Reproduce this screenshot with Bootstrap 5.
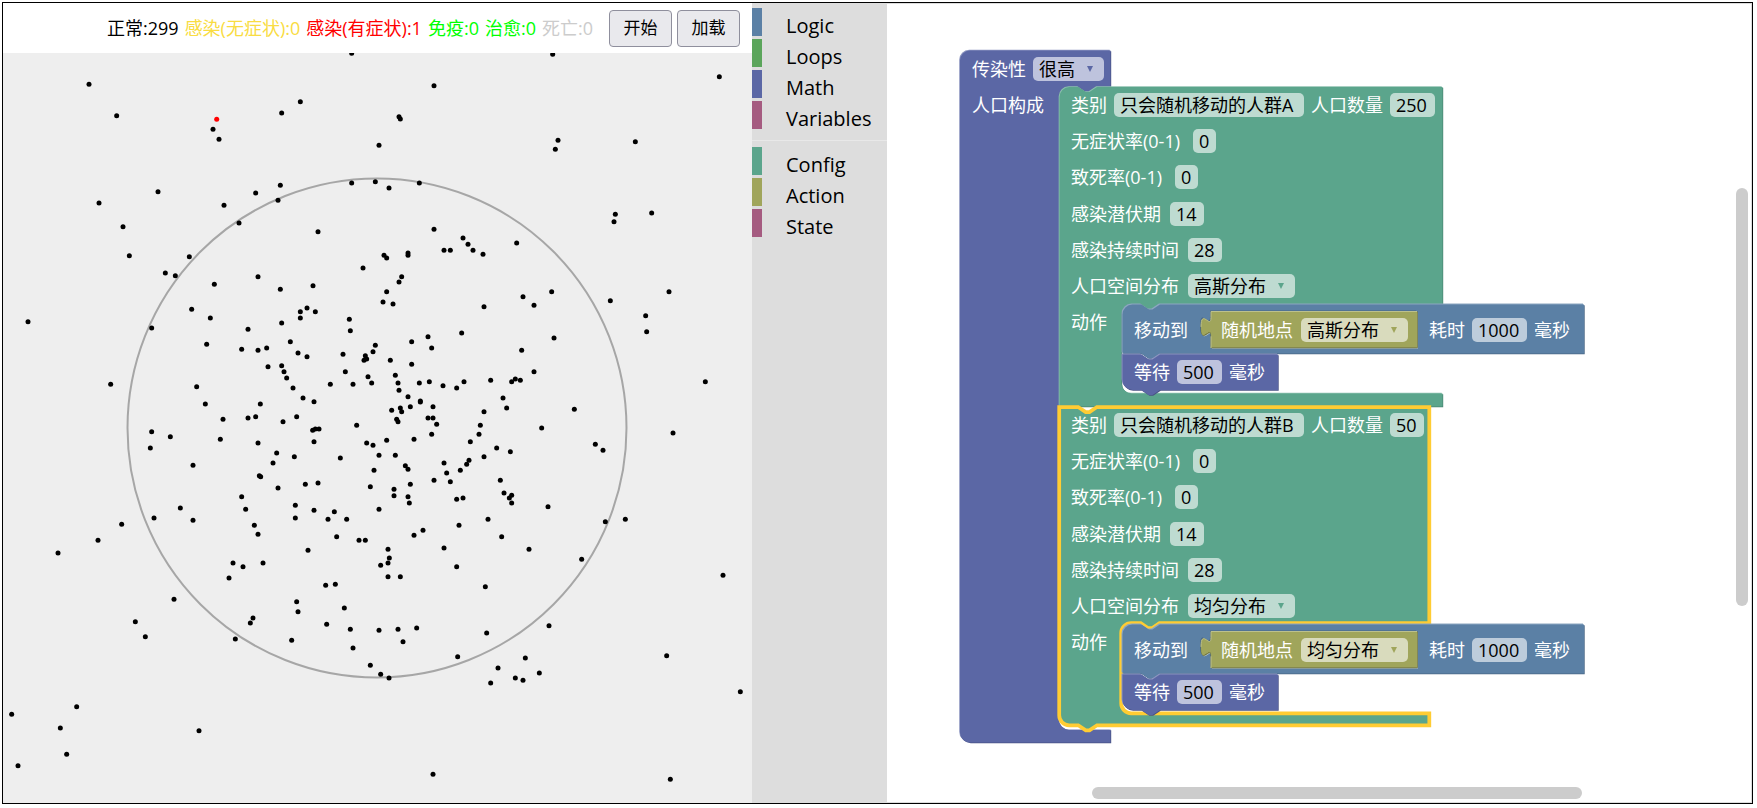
<!DOCTYPE html>
<html lang="zh-CN">
<head>
<meta charset="utf-8">
<meta name="viewport" content="width=device-width, initial-scale=1">
<title>传染模拟</title>
<link rel="stylesheet" href="https://cdn.jsdelivr.net/npm/bootstrap@5.3.0/dist/css/bootstrap.min.css">
<style>
  body { font-family: "Open Sans", "Noto Sans CJK SC", sans-serif; font-size: 18px; line-height: 24px; color: #000; background: #fff; }
  .app-frame { margin: 2px 4px 4px 2px; height: calc(100vh - 6px); border: 1px solid #000; }
  .sim-panel { width: calc(100vh - 59px); }
  .stat-bar { height: 50px; padding-right: 12px; white-space: nowrap; }
  .stat-list { gap: 6px; margin-right: 16px; }
  .btn-pair { gap: 5px; }
  .c-latent { color: #f9dc42; } .c-sick { color: #f00; } .c-good { color: #0f0; } .c-dead { color: #ccc; }
  .sim-btn { width: 63px; height: 37px; padding: 0; font-size: 17px; line-height: 24px; color: #000; background: #e9e9ed; border: 1px solid #8f8f9d; border-radius: 4px; }
  .sim-btn:hover { background: #d0d0d7; border-color: #676774; }
  .arena { background: #eee; }

  .toolbox { width: 135px; background: #ddd; padding-top: 5px; font-size: 20px; }
  .tool-item { display: block; height: 28px; margin-bottom: 3px; padding: 4px 0 0 24px; border-left: 10px solid; color: #000; text-decoration: none; line-height: 28px; }
  .tool-sep { height: 1px; margin: 11px 0 6px; background: #e8e8e8; }
  .t-logic { border-color: #5b80a5; } .t-loops { border-color: #5ba55b; } .t-math { border-color: #5b67a5; }
  .t-var { border-color: #a55b80; } .t-config { border-color: #5ba58c; } .t-action { border-color: #a0a55b; }

  .workspace { border: 1px solid #ddd; border-left: 0; padding: 46px 0 0 73px; }
  .bar-v { right: 3px; top: 184px; width: 12px; height: 418px; background: #ccc; border-radius: 6px; }
  .bar-h { left: 205px; bottom: 3px; width: 490px; height: 12px; background: #ccc; border-radius: 6px; }

  .stack { width: 630px; color: #fff; white-space: nowrap; }
  .shapes { left: 0; top: 0; overflow: visible; }
  .line { display: flex; align-items: center; gap: 7px; height: 36px; }
  .solo { gap: 9px; }
  .head-line { height: 37px; padding-left: 12px; }
  .arm-root { width: 99px; padding-left: 12px; }
  .group { height: 320px; padding-left: 12px; }
  .group-rows { height: 217px; display: flex; flex-direction: column; justify-content: space-between; }
  .arm-group { width: 51px; }
  .inner-line { padding-left: 12px; }
  .move-line { height: 50px; padding-top: 2px; }
  .nested { gap: 8px; margin: 0 6px 0 26px; }
  .field { height: 24px; padding: 0 0 0 6px; border: 0; border-radius: 5px; font: inherit; line-height: 24px; color: #000; appearance: none; background-color: #bedbd1; background-repeat: no-repeat; background-position: right 10px center; }
  .w-1 { width: 23px; } .w-2 { width: 34px; } .w-3 { width: 45px; } .w-4 { width: 55px; } .w-name { width: 190px; }
  .w-sel { width: 107px; } .w-sel-short { width: 71px; }
  select.field { background-image: url("data:image/svg+xml,%3Csvg xmlns='http://www.w3.org/2000/svg' width='8' height='8'%3E%3Cpath d='M1 1h6l-3 6z' fill='%235ba58c'/%3E%3C/svg%3E"); }
  .field.f-math { background-color: #bec3dd; }
  .field.f-logic { background-color: #bdccdb; }
  .field.f-action { background-color: #d9dbbd; }
  select.f-math { background-image: url("data:image/svg+xml,%3Csvg xmlns='http://www.w3.org/2000/svg' width='8' height='8'%3E%3Cpath d='M1 1h6l-3 6z' fill='%235b67a5'/%3E%3C/svg%3E"); }
  select.f-action { background-image: url("data:image/svg+xml,%3Csvg xmlns='http://www.w3.org/2000/svg' width='8' height='8'%3E%3Cpath d='M1 1h6l-3 6z' fill='%23a0a55b'/%3E%3C/svg%3E"); }
</style>
</head>
<body>
<div class="app-frame d-flex overflow-hidden">

  <section class="sim-panel d-flex flex-column flex-shrink-0">
    <div class="stat-bar d-flex align-items-center justify-content-end">
      <div class="stat-list d-flex">
        <span>正常:299</span>
        <span class="c-latent">感染(无症状):0</span>
        <span class="c-sick">感染(有症状):1</span>
        <span class="c-good">免疫:0</span>
        <span class="c-good">治愈:0</span>
        <span class="c-dead">死亡:0</span>
      </div>
      <div class="btn-pair d-flex">
        <button type="button" class="btn sim-btn">开始</button>
        <button type="button" class="btn sim-btn">加载</button>
      </div>
    </div>
    <svg class="arena d-block w-100" viewBox="0 0 749 750" role="img" aria-label="人群分布">
      <g id="people"></g>
      <circle cx="374" cy="375" r="249.5" fill="none" stroke="#000" stroke-opacity=".3" stroke-width="2"/>
    </svg>
  </section>

  <nav class="toolbox flex-shrink-0">
    <a href="#" class="tool-item t-logic">Logic</a>
    <a href="#" class="tool-item t-loops">Loops</a>
    <a href="#" class="tool-item t-math">Math</a>
    <a href="#" class="tool-item t-var">Variables</a>
    <div class="tool-sep"></div>
    <a href="#" class="tool-item t-config">Config</a>
    <a href="#" class="tool-item t-action">Action</a>
    <a href="#" class="tool-item t-var">State</a>
  </nav>

  <main class="workspace flex-grow-1 position-relative overflow-hidden">
    <div class="stack position-relative">
      <svg class="shapes position-absolute" width="630" height="700" viewBox="960 50 630 700" aria-hidden="true">
        <defs>
          <path id="p-root" d="M960 60.5a10 10 0 0 1 10-10H1110.5V87H1097l-7.5 5h-3.75l-7.5-5H1069a10 10 0 0 0-10 10V719.5a10 10 0 0 0 10 10H1110.5V742.5H970a10 10 0 0 1-10-10z"/>
          <path id="p-a" d="M1059.5 97a10 10 0 0 1 10-10H1078.2l7.5 5h3.75l7.5-5H1442.5V304H1159.5l-7.5 5h-3.75l-7.5-5H1131.5a10 10 0 0 0-10 10V383.5a10 10 0 0 0 10 10H1442.5V406.5H1059.5z"/>
          <path id="p-b" d="M1059.2 407H1078.2l7.5 5h3.75l7.5-5H1429.3V623.2H1159.5l-7.5 5h-3.75l-7.5-5H1131.2a10 10 0 0 0-10 10V703.3a10 10 0 0 0 10 10H1429.3V725.3H1097l-7.5 5h-3.75l-7.5-5H1069.2a10 10 0 0 1-10-10z"/>
          <path id="p-move" d="M1122.5 314.5a10 10 0 0 1 10-10H1141.2l7.5 5h3.75l7.5-5H1584V353.5H1160l-7.5 5h-3.75l-7.5-5H1122.5z"/>
          <path id="p-wait" d="M1122.5 354.5H1141.2l7.5 5h3.75l7.5-5H1278V390H1160l-7.5 5h-3.75l-7.5-5H1132.5a10 10 0 0 1-10-10z"/>
          <path id="p-place" d="M1211 311.5H1417V347.5H1211V336.3C1211 323.8 1201 346.3 1201 326.9S1211 330 1211 317.5z"/>
          <g id="actions">
            <g><use href="#p-move" x="-1" y="-1" fill="#8ca6c0"/><use href="#p-move" x=".7" y=".7" fill="#496684"/><use href="#p-move" fill="#5b80a5"/></g>
            <g><use href="#p-wait" x="-1" y="-1" fill="#8c95c0"/><use href="#p-wait" x=".7" y=".7" fill="#495284"/><use href="#p-wait" fill="#5b67a5"/></g>
            <path d="M1141.2 353l7.5 5h3.75l7.5-5z" fill="#5b80a5"/>
            <g><use href="#p-place" x="1" y="1" fill="#bdccdb"/><use href="#p-place" x="-1" y="-1" fill="#496684"/><use href="#p-place" x=".3" y=".3" stroke="#80844a"/><use href="#p-place" fill="#a0a55b"/><path d="M1211 348V336.3M1201 326.9C1201 307.5 1211 330 1211 317.5V311.5H1417" fill="none" stroke="#bcc08c"/></g>
          </g>
        </defs>
        <g><use href="#p-root" x="-.8" y="-.8" fill="#8c95c0"/><use href="#p-root" x=".7" y=".7" fill="#495284"/><use href="#p-root" fill="#5b67a5"/></g>
        <path d="M1059 700V719.5a10 10 0 0 0 10 10H1110V700z" fill="#fff"/>
        <g><use href="#p-a" x="-.8" y="-.8" fill="#8cc0ae"/><use href="#p-a" x=".7" y=".7" fill="#498470"/><use href="#p-a" fill="#5ba58c"/></g>
        <use href="#p-b" fill="#5ba58c" stroke="#fc3" stroke-width="3.75"/>
        <use href="#actions"/>
        <use href="#actions" y="320"/>
      </svg>

      <div class="position-relative">
        <div class="line head-line">
          <label for="infect">传染性</label>
          <select id="infect" class="field f-math w-sel-short"><option>很高</option></select>
        </div>
        <div class="d-flex">
          <div class="arm-root"><div class="line">人口构成</div></div>
          <div>
            <section class="group">
              <div class="group-rows">
                <div class="line"><label for="a1">类别</label><input id="a1" class="field w-name" value="只会随机移动的人群A"><label for="a2">人口数量</label><input id="a2" class="field w-3" value="250"></div>
                <div class="line solo"><label for="a3" class="me-1">无症状率(0-1)</label><input id="a3" class="field w-1" value="0"></div>
                <div class="line solo"><label for="a4" class="me-1">致死率(0-1)</label><input id="a4" class="field w-1" value="0"></div>
                <div class="line solo"><label for="a5">感染潜伏期</label><input id="a5" class="field w-2" value="14"></div>
                <div class="line solo"><label for="a6">感染持续时间</label><input id="a6" class="field w-2" value="28"></div>
                <div class="line solo"><label for="a7">人口空间分布</label><select id="a7" class="field w-sel"><option>高斯分布</option></select></div>
              </div>
              <div class="d-flex">
                <div class="arm-group"><div class="line">动作</div></div>
                <div>
                  <div class="line inner-line move-line"><span>移动到</span>
                    <div class="nested d-flex"><label for="a8">随机地点</label><select id="a8" class="field f-action w-sel"><option>高斯分布</option></select></div>
                    <label for="a9" class="ps-2">耗时</label><input id="a9" class="field f-logic w-4" value="1000"><span>毫秒</span></div>
                  <div class="line inner-line"><label for="a10">等待</label><input id="a10" class="field f-math w-3" value="500"><span>毫秒</span></div>
                </div>
              </div>
            </section>
            <section class="group">
              <div class="group-rows">
                <div class="line"><label for="b1">类别</label><input id="b1" class="field w-name" value="只会随机移动的人群B"><label for="b2">人口数量</label><input id="b2" class="field w-2" value="50"></div>
                <div class="line solo"><label for="b3" class="me-1">无症状率(0-1)</label><input id="b3" class="field w-1" value="0"></div>
                <div class="line solo"><label for="b4" class="me-1">致死率(0-1)</label><input id="b4" class="field w-1" value="0"></div>
                <div class="line solo"><label for="b5">感染潜伏期</label><input id="b5" class="field w-2" value="14"></div>
                <div class="line solo"><label for="b6">感染持续时间</label><input id="b6" class="field w-2" value="28"></div>
                <div class="line solo"><label for="b7">人口空间分布</label><select id="b7" class="field w-sel"><option>均匀分布</option></select></div>
              </div>
              <div class="d-flex">
                <div class="arm-group"><div class="line">动作</div></div>
                <div>
                  <div class="line inner-line move-line"><span>移动到</span>
                    <div class="nested d-flex"><label for="b8">随机地点</label><select id="b8" class="field f-action w-sel"><option>均匀分布</option></select></div>
                    <label for="b9" class="ps-2">耗时</label><input id="b9" class="field f-logic w-4" value="1000"><span>毫秒</span></div>
                  <div class="line inner-line"><label for="b10">等待</label><input id="b10" class="field f-math w-3" value="500"><span>毫秒</span></div>
                </div>
              </div>
            </section>
          </div>
        </div>
      </div>
    </div>
    <div class="bar-v position-absolute"></div>
    <div class="bar-h position-absolute"></div>
  </main>
</div>

<script src="https://cdn.jsdelivr.net/npm/bootstrap@5.3.0/dist/js/bootstrap.bundle.min.js"></script>
<script>
  // One list of people per quarter of the field: origin of the quarter, then x,y pairs in thirds of a unit.
  const quarters = [
    { x: -3, y: -53, at: "1055,160 267,253 350,347 901,305 845,339 639,388 657,418 1137,436 474,575 297,609 369,680 388,767 767,579 841,556 834,601 672,616 717,669 1055,549 1126,545 954,695 568,770 496,819 526,827 643,853 774,830 841,868 939,857 1089,804 575,928 631,954 455,984 84,965 744,988 845,969 901,935 921,924 946,935 901,954 1048,958 1051,992 620,1033 725,1048 774,1051 800,1044 871,1025 894,1059 921,1070 804,1100 845,1097 852,1115 860,1134 879,1164 909,1194 942,1205 1029,1063 1036,1115 991,1153 1059,1153 1104,1130 1115,1149 1092,1081 1100,1077 1096,1067 1119,1055 1126,1036 332,1153 590,1160 616,1212 781,1212" },
    { x: 377, y: -53, at: "518,163 162,257 1018,230 57,350 61,357 534,421 526,448 766,425 27,564 118,549 706,643 702,665 815,639 162,688 249,714 264,733 279,751 309,763 192,751 211,751 410,729 12,766 20,774 84,759 84,766 65,830 57,846 20,875 9,906 39,912 429,890 462,916 515,875 312,920 691,902 867,875 797,947 800,995 522,1014 144,1010 95,1025 155,1044 245,999 31,1081 95,1093 425,1051 462,1115 46,1126 54,1149 57,1171 84,1190 118,1149 148,1145 189,1157 230,1164 252,1145 332,1141 395,1145 406,1137 421,1141 369,1194 121,1203 976,1145" },
    { x: -3, y: 347, at: "669,58 744,54 767,50 849,65 890,50 455,95 511,110 451,144 661,118 774,129 938,91 946,87 957,87 942,125 1070,76 1100,129 1119,136 1137,166 830,159 819,189 883,170 1021,174 579,196 778,227 782,230 834,264 916,253 954,249 1122,211 1111,260 725,290 737,328 541,324 462,354 579,361 365,373 294,421 174,459 763,376 774,403 886,316 886,354 942,331 984,358 1003,335 1040,358 1137,328 1010,410 924,451 1077,421 1096,421 699,489 729,500 789,489 687,534 522,598 977,556 1006,553 890,605 894,635 1033,624 406,665 436,710 759,654 751,669 706,717 875,721 980,673 1051,688 1059,744 1137,691 1111,796 230,920 35,943 181,984 200,1063 54,1097 597,992" },
    { x: 377, y: 347, at: "121,6 35,31 61,24 65,35 91,20 159,20 50,58 54,65 144,54 159,54 170,73 155,103 102,118 20,121 46,166 76,197 84,208 312,35 301,76 297,103 271,125 380,24 485,84 583,28 350,144 391,155 312,170 267,181 260,193 241,211 192,189 200,219 211,245 162,241 91,253 42,268 42,287 84,290 88,309 230,298 249,294 361,241 372,279 395,286 388,294 395,309 504,320 646,133 669,151 879,99 676,365 736,358 605,478 324,358 237,376 129,391 102,406 365,410 447,448 192,444 230,500 24,448 28,474 24,489 2,496 24,530 61,530 316,560 1029,526 54,688 110,684 69,725 320,699 507,677 233,770 436,774 354,804 332,849 406,834 429,841 478,819 2,823 27,834 860,767 1081,875 159,1123 871,1138" }
  ];
  const dot = (x, y, fill) => `<circle cx="${x}" cy="${y}" r="2.5" fill="${fill}"/>`;
  document.getElementById("people").innerHTML = quarters.map(q =>
    q.at.split(" ").map(p => p.split(",")).map(([x, y]) => dot(q.x + x / 3, q.y + y / 3, "#000")).join("")
  ).join("") + dot(213.7, 66.2, "#f00");
</script>
</body>
</html>
